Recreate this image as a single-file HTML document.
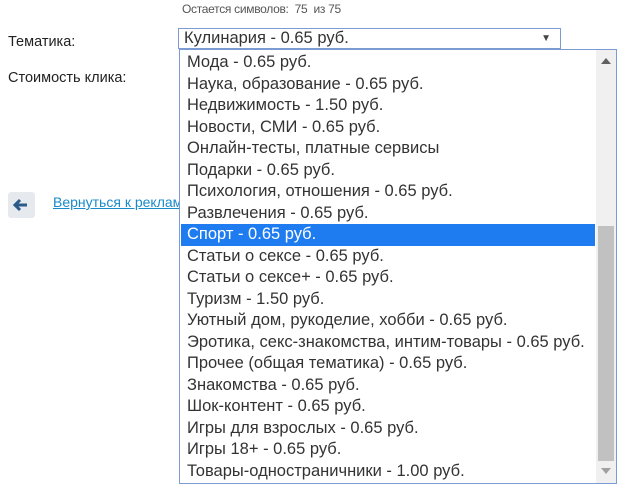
<!DOCTYPE html>
<html><head><meta charset="utf-8"><style>
body{margin:0;width:620px;height:493px;background:#fff;position:relative;overflow:hidden;font-family:"Liberation Sans",Arial,sans-serif;}
.a{position:absolute;white-space:nowrap}
.lbl{font-size:14.5px;color:#222}
#sel{left:178px;top:28px;width:383px;height:21px;border:1px solid #7a9cd3;box-sizing:border-box;background:#fff;font-size:16.5px;color:#333;padding-left:5px;line-height:19px}
#list{left:179px;top:49px;width:438px;height:435px;border:1px solid #7a9cd3;box-sizing:border-box;background:#fff}
.it{position:absolute;left:1px;width:414px;height:21.5px;font-size:16.5px;line-height:21px;color:#333;padding-left:6px;box-sizing:border-box}
.it.s{background:#1e7cf0;color:#fff}
#sb{position:absolute;right:0;top:0;width:20px;height:433px;background:#f0f0f0}
#th{position:absolute;left:2px;top:176px;width:16px;height:235px;background:#c1c1c1}
</style></head><body>
<div class="a" style="left:182px;top:2px;font-size:12px;color:#555;letter-spacing:-0.3px">Остается символов:&nbsp; 75 &nbsp;из 75</div>
<div class="a lbl" style="left:8px;top:34px">Тематика:</div>
<div class="a lbl" style="left:8px;top:70px">Стоимость клика:</div>
<div class="a" style="left:8px;top:192px;width:27px;height:26px;background:#e6eaee;border-radius:3px"></div>
<svg class="a" style="left:12px;top:196px" width="18" height="18" viewBox="0 0 18 18"><path d="M3 9H15M8 4L3 9L8 14" stroke="#2c5a8a" stroke-width="3" fill="none"/></svg>
<div class="a" style="left:53px;top:194px;font-size:14px;color:#1a8ac9;text-decoration:underline">Вернуться к рекламным</div>
<div class="a" id="sel">Кулинария - 0.65 руб.<span style="position:absolute;right:9px;top:0;font-size:10px;color:#444">▼</span></div>
<div class="a" id="list">
<div class="it" style="top:2px">Мода - 0.65 руб.</div>
<div class="it" style="top:23.5px">Наука, образование - 0.65 руб.</div>
<div class="it" style="top:45px">Недвижимость - 1.50 руб.</div>
<div class="it" style="top:66.5px">Новости, СМИ - 0.65 руб.</div>
<div class="it" style="top:88px">Онлайн-тесты, платные сервисы</div>
<div class="it" style="top:109.5px">Подарки - 0.65 руб.</div>
<div class="it" style="top:131px">Психология, отношения - 0.65 руб.</div>
<div class="it" style="top:152.5px">Развлечения - 0.65 руб.</div>
<div class="it s" style="top:174px">Спорт - 0.65 руб.</div>
<div class="it" style="top:195.5px">Статьи о сексе - 0.65 руб.</div>
<div class="it" style="top:217px">Статьи о сексе+ - 0.65 руб.</div>
<div class="it" style="top:238.5px">Туризм - 1.50 руб.</div>
<div class="it" style="top:260px">Уютный дом, рукоделие, хобби - 0.65 руб.</div>
<div class="it" style="top:281.5px">Эротика, секс-знакомства, интим-товары - 0.65 руб.</div>
<div class="it" style="top:303px">Прочее (общая тематика) - 0.65 руб.</div>
<div class="it" style="top:324.5px">Знакомства - 0.65 руб.</div>
<div class="it" style="top:346px">Шок-контент - 0.65 руб.</div>
<div class="it" style="top:367.5px">Игры для взрослых - 0.65 руб.</div>
<div class="it" style="top:389px">Игры 18+ - 0.65 руб.</div>
<div class="it" style="top:410.5px">Товары-одностраничники - 1.00 руб.</div>
<div id="sb"><div id="th"></div>
<svg style="position:absolute;left:5px;top:8px" width="10" height="6"><path d="M0 6L5 0L10 6Z" fill="#606060"/></svg>
<svg style="position:absolute;left:5px;top:418px" width="10" height="6"><path d="M0 0L5 6L10 0Z" fill="#a0a0a0"/></svg>
</div>
</div>
</body></html>
